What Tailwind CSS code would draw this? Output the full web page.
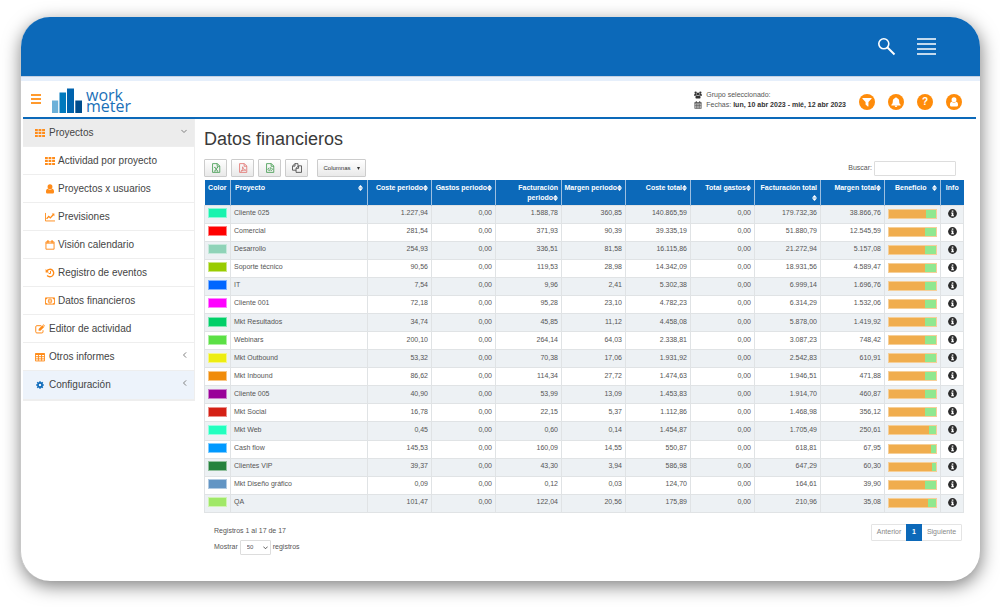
<!DOCTYPE html>
<html lang="es">
<head>
  <meta charset="UTF-8" />
  <meta name="viewport" content="width=device-width, initial-scale=1" />
  <title>WorkMeter - Datos financieros</title>
  <script src="https://cdn.jsdelivr.net/npm/@tailwindcss/browser@4"></script>
</head>
<body class="bg-white px-5 pt-[17px] pb-[26px] font-['Liberation_Sans',Arial,sans-serif] text-[7px] text-[#555]">

  <!-- Iconos -->
  <svg class="hidden">
    <symbol id="i-th" viewBox="0 0 16 16"><path fill="currentColor" d="M0 1.500h4.500v3.500H0zM5.700 1.500h4.500v3.500H5.700zM11.400 1.500H16v3.500h-4.600zM0 6.200h4.500v3.500H0zM5.700 6.200h4.500v3.500H5.700zM11.400 6.200H16v3.500h-4.600zM0 11h4.500v3.500H0zM5.700 11h4.500v3.500H5.700zM11.400 11H16v3.500h-4.600z"/></symbol>
    <symbol id="i-user" viewBox="0 0 16 16"><path fill="currentColor" d="M8 .5a3.900 3.900 0 0 1 3.900 4A3.900 3.900 0 0 1 8 8.500a3.900 3.900 0 0 1-3.900-4A3.900 3.900 0 0 1 8 .5zM4.600 7.600C2.400 8 1.500 10 1.500 12.300c0 1.900 1.200 3 2.700 3h7.600c1.500 0 2.700-1.100 2.700-3 0-2.300-.9-4.300-3.100-4.700A4.700 4.700 0 0 1 8 9.300a4.700 4.700 0 0 1-3.400-1.700z"/></symbol>
    <symbol id="i-chart" viewBox="0 0 16 16"><path fill="none" stroke="currentColor" stroke-width="1.500" d="M.7 1.500v12.800H16"/><path fill="none" stroke="currentColor" stroke-width="2.200" d="M2.500 11l3.500-4 2.500 2.400 5-5.400"/><path fill="currentColor" d="M10.800 2.500H15v4.300z"/></symbol>
    <symbol id="i-cal" viewBox="0 0 16 16"><path fill="none" stroke="currentColor" stroke-width="1.500" d="M1.500 3h13v11.700h-13zM1.500 5h13"/><path stroke="currentColor" stroke-width="2.400" d="M4.700 .5v4M11.300 .5v4"/></symbol>
    <symbol id="i-calgrid" viewBox="0 0 16 16"><path fill="none" stroke="currentColor" stroke-width="1.300" d="M1.500 3h13v12h-13zM1.500 6h13M1.500 9h13M1.500 12h13M4.800 6v9M8 6v9M11.200 6v9"/><path stroke="currentColor" stroke-width="2.400" d="M1.500 4h13M4.700 .5v4M11.300 .5v4"/></symbol>
    <symbol id="i-history" viewBox="0 0 16 16"><path fill="none" stroke="currentColor" stroke-width="2.200" d="M3 4.600A6 6 0 1 1 3.400 12"/><path fill="currentColor" d="M1 1.500V7h5.500z"/><path fill="none" stroke="currentColor" stroke-width="1.600" d="M8.800 4.800v4H6"/></symbol>
    <symbol id="i-money" viewBox="0 0 16 16"><path fill="none" stroke="currentColor" stroke-width="1.500" d="M.7 3h14.600v10H.7z"/><path fill="currentColor" d="M1 3h2.400A2.400 2.400 0 0 1 1 5.400zM15 3h-2.400A2.400 2.400 0 0 0 15 5.400zM1 13h2.400A2.400 2.400 0 0 0 1 10.600zM15 13h-2.400a2.400 2.400 0 0 1 2.400-2.400z"/><ellipse cx="8" cy="8" rx="2.800" ry="3.300" fill="none" stroke="currentColor" stroke-width="1.400"/><path stroke="currentColor" stroke-width="1.400" d="M8 6v4"/></symbol>
    <symbol id="i-edit" viewBox="0 0 16 16"><path fill="none" stroke="currentColor" stroke-width="1.600" d="M10 2.700H3A1.800 1.800 0 0 0 1.200 4.500v8A1.800 1.800 0 0 0 3 14.300h8a1.800 1.800 0 0 0 1.800-1.800V10"/><path fill="currentColor" d="M5.800 8l6-6 2.900 2.900-6 6H5.800z"/><path fill="currentColor" d="M12.500 1.300l1-.9 2.500 2.600-.9 1z"/></symbol>
    <symbol id="i-table" viewBox="0 0 16 16"><path fill="none" stroke="currentColor" stroke-width="1.500" d="M.7 2.500h14.600v11.800H.7zM.7 7.500h14.600M.7 11h14.600M5.500 4v10M10.500 4v10"/><path fill="currentColor" d="M.7 2h14.600v2.800H.7z"/></symbol>
    <symbol id="i-cog" viewBox="0 0 16 16"><circle cx="8" cy="8" r="4.200" fill="none" stroke="currentColor" stroke-width="3.400"/><path stroke="currentColor" stroke-width="3" d="M8 .4v2.400M8 13.200v2.400M.4 8h2.400M13.200 8h2.400M2.600 2.600l1.700 1.700M11.700 11.700l1.700 1.700M13.400 2.600l-1.700 1.700M4.300 11.700l-1.700 1.700"/></symbol>
    <symbol id="i-group" viewBox="0 0 16 16"><g fill="currentColor"><circle cx="3.300" cy="3.500" r="2.300"/><circle cx="12.700" cy="3.500" r="2.300"/><path d="M0 9.500C0 7.400.8 6.200 2 6.200h3L4.800 9.500zM16 9.500c0-2.100-.8-3.300-2-3.300h-3l.2 3.300z"/><circle cx="8" cy="6" r="3.100"/><path d="M5.200 9C3.500 9.400 2.900 11 2.900 13c0 1.400.7 2 1.900 2h6.400c1.200 0 1.900-.6 1.900-2 0-2-.6-3.600-2.300-4-1.700 1.400-3.900 1.400-5.600 0z"/></g></symbol>
    <symbol id="i-filter" viewBox="0 0 16 16"><path fill="currentColor" d="M1.300 1.500h13.400c.7 0 .9.800.5 1.200L10.300 8v6.600c0 .6-.7.900-1.100.5L6 12.300a.8.800 0 0 1-.3-.6V8L.8 2.700c-.4-.4-.2-1.200.5-1.200z"/></symbol>
    <symbol id="i-bell" viewBox="0 0 16 16"><path fill="currentColor" d="M8 .3c.7 0 1.100.5 1.100 1.100v.3c2.800.5 4 2.600 4 5.200 0 3.100.9 4.600 2.400 5.600v1H.5v-1c1.500-1 2.400-2.500 2.400-5.600 0-2.600 1.200-4.700 4-5.200v-.3C6.900.8 7.300.3 8 .3zM5.900 13.800h4.200a2.100 2.100 0 0 1-4.200 0z"/></symbol>
    <symbol id="i-file" viewBox="0 0 16 16"><path fill="none" stroke="currentColor" stroke-width="1.300" d="M2.500 1h7.700L14 4.800V15H2.500zM9.800 1v4.200H14"/></symbol>
    <symbol id="i-sort" viewBox="0 0 10 12"><path fill="currentColor" d="M5 0l5 5.300H0zM5 12L0 6.700h10z"/></symbol>
    <symbol id="i-info" viewBox="0 0 16 16"><circle cx="8" cy="8" r="7.800" fill="currentColor"/><path fill="#fff" d="M6.700 2.600h2.800v2.300H6.700zM5.600 6.300h3.900v4.800h1.100v1.700h-5v-1.700h1.100V8H5.600z"/></symbol>
    <symbol id="i-down" viewBox="0 0 16 16"><path fill="none" stroke="currentColor" stroke-width="2.500" d="M1 5l7 7 7-7"/></symbol>
    <symbol id="i-left" viewBox="0 0 16 16"><path fill="none" stroke="currentColor" stroke-width="2.500" d="M11 1L4 8l7 7"/></symbol>
  </svg>

  <div class="rounded-[30px] overflow-hidden bg-white border-l border-[#c8c8c8] pb-[26px] shadow-[1px_5px_18px_rgba(0,0,0,0.5)]">

    <!-- Barra superior -->
    <div class="h-[59px] bg-[#0c69b9] text-white flex items-center justify-end gap-[21px] pr-11">
      <button aria-label="Buscar en el sitio">
        <svg class="w-[19px] h-[19px]" viewBox="0 0 19 19" fill="none" stroke="currentColor"><circle cx="6.800" cy="6.800" r="5" stroke-width="1.600"/><path stroke-width="2" d="M10.500 10.500l7 7"/></svg>
      </button>
      <button aria-label="Menú">
        <svg class="w-[19px] h-[17px]" viewBox="0 0 19 17" stroke="currentColor" stroke-width="1.600"><path d="M0 1h19M0 6h19M0 11h19M0 16h19"/></svg>
      </button>
    </div>
    <div class="h-[5px] bg-[#e6effb] border-t border-[#c3d0e2]"></div>

    <div class="ml-0.5">
      <!-- Cabecera -->
      <header class="h-[38px] mr-1 border-b-2 border-[#0c69b9] flex items-center pl-2 pr-3.5">
        <button aria-label="Contraer menú" class="text-[#ff9a2e]">
          <svg class="w-2.5 h-2.5" viewBox="0 0 10 10" stroke="currentColor" stroke-width="2"><path d="M0 1h10M0 5h10M0 9h10"/></svg>
        </button>
        <a href="#" class="ml-2.5 pt-0.5 flex items-center gap-1 text-[#1a70b8]">
          <svg class="w-[31px] h-[25px]" viewBox="0 0 31 25"><path fill="#6cb0d8" d="M1 12.500h6.200V25H1z"/><path fill="#0079bd" d="M8.500 4.500H15V25H8.500z"/><path fill="#0063ad" d="M16 .5h7V25h-7z"/><path fill="#004d8d" d="M24.300 12.500H31V25h-6.700z"/></svg>
          <span class="font-['Open_Sans',sans-serif] text-[16px] leading-[11px] pt-0.5">work<br>meter</span>
        </a>
        <div class="ml-auto mr-[13px] pt-0.5 leading-[10px] flex flex-col">
          <div class="flex items-center gap-1"><svg class="w-2 h-2 text-[#333]"><use href="#i-group"/></svg>Grupo seleccionado:</div>
          <div class="flex items-center gap-1"><svg class="w-2 h-2"><use href="#i-calgrid"/></svg><span>Fechas: <b class="text-[#333]">lun, 10 abr 2023 - mié, 12 abr 2023</b></span></div>
        </div>
        <div class="flex gap-[13px] pt-1.5 text-white">
          <button aria-label="Filtros" class="size-4 rounded-full bg-[#ff8c0a] flex items-center justify-center"><svg class="size-2.5"><use href="#i-filter"/></svg></button>
          <button aria-label="Avisos" class="size-4 rounded-full bg-[#ff8c0a] flex items-center justify-center"><svg class="size-2.5"><use href="#i-bell"/></svg></button>
          <button aria-label="Ayuda" class="size-4 rounded-full bg-[#ff8c0a] flex items-center justify-center text-[10px] leading-none font-bold">?</button>
          <button aria-label="Usuario" class="size-4 rounded-full bg-[#ff8c0a] flex items-center justify-center"><svg class="size-2.5"><use href="#i-user"/></svg></button>
        </div>
      </header>

      <div class="flex items-start">
        <!-- Menú lateral -->
        <nav class="w-[172px] shrink-0 border-r border-b-2 border-[#eee] text-[10px] text-[#444]">
          <a href="#" class="h-7 pl-3 pr-[7px] flex items-center gap-1 bg-[#ececec] border-b border-[#eee]"><svg class="size-2.5 text-[#ff8c1a]"><use href="#i-th"/></svg>Proyectos<svg class="size-1.5 ml-auto mb-1 text-[#777]"><use href="#i-down"/></svg></a>
          <a href="#" class="h-7 pl-[22px] flex items-center gap-[3px] border-b border-[#eee]"><svg class="size-2.5 text-[#ff8c1a]"><use href="#i-th"/></svg>Actividad por proyecto</a>
          <a href="#" class="h-7 pl-[22px] flex items-center gap-[3px] border-b border-[#eee]"><svg class="size-2.5 text-[#ff8c1a]"><use href="#i-user"/></svg>Proyectos x usuarios</a>
          <a href="#" class="h-7 pl-[22px] flex items-center gap-[3px] border-b border-[#eee]"><svg class="size-2.5 text-[#ff8c1a]"><use href="#i-chart"/></svg>Previsiones</a>
          <a href="#" class="h-7 pl-[22px] flex items-center gap-[3px] border-b border-[#eee]"><svg class="size-2.5 text-[#ff8c1a]"><use href="#i-cal"/></svg>Visión calendario</a>
          <a href="#" class="h-7 pl-[22px] flex items-center gap-[3px] border-b border-[#eee]"><svg class="size-2.5 text-[#ff8c1a]"><use href="#i-history"/></svg>Registro de eventos</a>
          <a href="#" class="h-7 pl-[22px] flex items-center gap-[3px] border-b border-[#eee]"><svg class="size-2.5 text-[#ff8c1a]"><use href="#i-money"/></svg>Datos financieros</a>
          <a href="#" class="h-7 pl-3 flex items-center gap-1 border-b border-[#eee]"><svg class="size-2.5 text-[#ff8c1a]"><use href="#i-edit"/></svg>Editor de actividad</a>
          <a href="#" class="h-7 pl-3 pr-1.5 flex items-center gap-1 border-b border-[#eee]"><svg class="size-2.5 text-[#ff8c1a]"><use href="#i-table"/></svg>Otros informes<svg class="size-1.5 ml-auto mb-1 text-[#777]"><use href="#i-left"/></svg></a>
          <a href="#" class="h-7 pl-3 pr-1.5 flex items-center gap-1 bg-[#edf3fb] border-b border-[#edf3fb]"><svg class="size-2.5 p-px text-[#0c69b9]"><use href="#i-cog"/></svg>Configuración<svg class="size-1.5 ml-auto mb-1 text-[#777]"><use href="#i-left"/></svg></a>
        </nav>

        <!-- Contenido -->
        <main class="flex-1 min-w-0 pl-[9px] pr-4">
          <h1 class="pt-2 text-[18px] leading-6 text-[#3a3a3a]">Datos financieros</h1>

          <div class="mt-2 mb-[3px] flex items-center">
            <div class="flex gap-1">
              <button aria-label="Exportar a Excel" class="w-[23px] h-[18px] rounded-[1px] border border-[#ccc] bg-linear-to-b from-white to-[#e9e9e9] flex items-center justify-center text-[#3f9a4c]"><svg class="size-2.5" viewBox="0 0 16 16"><use href="#i-file"/><path fill="none" stroke="currentColor" stroke-width="1.300" d="M6 7l4.500 6M10.500 7L6 13M5.200 7h2M9.300 7h2M5.200 13h2M9.300 13h2"/></svg></button>
              <button aria-label="Exportar a PDF" class="w-[23px] h-[18px] rounded-[1px] border border-[#ccc] bg-linear-to-b from-white to-[#e9e9e9] flex items-center justify-center text-[#e2706d]"><svg class="size-2.5" viewBox="0 0 16 16"><use href="#i-file"/><path fill="none" stroke="currentColor" stroke-width="1.200" d="M4.500 13.500c2-1 3.500-4 3-7.500 0 3 2 5.200 5 5.500-3-.5-5.500.3-8 2z"/></svg></button>
              <button aria-label="Exportar a CSV" class="w-[23px] h-[18px] rounded-[1px] border border-[#ccc] bg-linear-to-b from-white to-[#e9e9e9] flex items-center justify-center text-[#3f9a4c]"><svg class="size-2.5" viewBox="0 0 16 16"><use href="#i-file"/><path fill="none" stroke="currentColor" stroke-width="1.300" d="M6.500 7.500l-2 2.500 2 2.500M10 7.500l2 2.500-2 2.500M8.800 7l-1.200 6"/></svg></button>
              <button aria-label="Copiar" class="w-[23px] h-[18px] rounded-[1px] border border-[#ccc] bg-linear-to-b from-white to-[#e9e9e9] flex items-center justify-center text-[#444]"><svg class="size-2.5" viewBox="0 0 16 16"><path fill="none" stroke="currentColor" stroke-width="1.300" d="M6.500 11.500H.8V5L4.500 1h5v3.500M4.800 1v4H1M6.500 8.500l3.700-4h5V15H6.500zM10.500 4.500v4h-4"/></svg></button>
            </div>
            <button class="ml-[9px] w-[49px] h-[18px] rounded-[1px] border border-[#ccc] bg-linear-to-b from-white to-[#e9e9e9] flex items-center justify-center gap-1.5 text-[6px] text-[#333]">Columnas <svg class="w-[3px] h-[3px]" viewBox="0 0 4 4"><path fill="currentColor" d="M0 0h4L2 4z"/></svg></button>
            <label for="buscar" class="ml-auto mr-0.5">Buscar:</label>
            <input id="buscar" type="text" class="w-[82px] h-[15px] mr-2 px-1 border border-[#ddd] rounded-[1px] outline-none" />
          </div>

          <table class="w-full h-[333px] table-fixed border-collapse">
            <colgroup>
              <col class="w-[26px]"><col><col class="w-[64px]"><col class="w-[64px]"><col class="w-[66px]"><col class="w-[64px]"><col class="w-[65px]"><col class="w-[64px]"><col class="w-[66px]"><col class="w-[64px]"><col class="w-[56px]"><col class="w-[23px]">
            </colgroup>
            <thead class="bg-[#0c69b9] text-white text-right leading-[10px]">
              <tr class="h-[25px] align-top">
                <th class="pt-[3px] border-r border-[#9dbfe0] text-center">Color</th>
                <th class="pt-[3px] px-1 border-r border-[#9dbfe0]"><span class="flex items-center justify-between">Proyecto<svg class="w-[5px] h-1.5"><use href="#i-sort"/></svg></span></th>
                <th class="pt-[3px] pr-[3px] border-r border-[#9dbfe0] whitespace-nowrap">Coste periodo<svg class="w-[5px] h-1.5 inline-block align-[-1px]"><use href="#i-sort"/></svg></th>
                <th class="pt-[3px] pr-[3px] border-r border-[#9dbfe0] whitespace-nowrap">Gastos periodo<svg class="w-[5px] h-1.5 inline-block align-[-1px]"><use href="#i-sort"/></svg></th>
                <th class="pt-[3px] pr-[3px] border-r border-[#9dbfe0]">Facturación periodo<svg class="w-[5px] h-1.5 inline-block align-[-1px]"><use href="#i-sort"/></svg></th>
                <th class="pt-[3px] pr-[3px] border-r border-[#9dbfe0] whitespace-nowrap">Margen periodo<svg class="w-[5px] h-1.5 inline-block align-[-1px]"><use href="#i-sort"/></svg></th>
                <th class="pt-[3px] pr-[3px] border-r border-[#9dbfe0] whitespace-nowrap">Coste total<svg class="w-[5px] h-1.5 inline-block align-[-1px]"><use href="#i-sort"/></svg></th>
                <th class="pt-[3px] pr-[3px] border-r border-[#9dbfe0] whitespace-nowrap">Total gastos<svg class="w-[5px] h-1.5 inline-block align-[-1px]"><use href="#i-sort"/></svg></th>
                <th class="pt-[3px] pr-[3px] border-r border-[#9dbfe0]">Facturación total <svg class="w-[5px] h-1.5 inline-block align-[-1px]"><use href="#i-sort"/></svg></th>
                <th class="pt-[3px] pr-[3px] border-r border-[#9dbfe0] whitespace-nowrap">Margen total<svg class="w-[5px] h-1.5 inline-block align-[-1px]"><use href="#i-sort"/></svg></th>
                <th class="pt-[3px] pl-2.5 pr-[3px] border-r border-[#9dbfe0]"><span class="flex items-center justify-between">Beneficio<svg class="w-[5px] h-1.5"><use href="#i-sort"/></svg></span></th>
                <th class="pt-[3px] text-center">Info</th>
              </tr>
            </thead>
            <tbody id="filas" class="text-right leading-[10px]"></tbody>
          </table>

          <div class="mt-[11px] pl-2.5 pr-0.5 flex items-start justify-between">
            <div class="pt-px">
              <p class="leading-[12px]">Registros 1 al 17 de 17</p>
              <div class="mt-[3px] flex items-center gap-0.5">
                <label for="mostrar">Mostrar</label>
                <span class="relative">
                  <select id="mostrar" class="block appearance-none w-[31px] h-[15px] pl-1.5 border border-[#ddd] rounded-[1px] bg-white text-[6px]"><option>10</option><option>25</option><option selected>50</option><option>100</option></select>
                  <svg class="absolute right-[3px] top-[5px] size-[5px] text-[#333] pointer-events-none"><use href="#i-down"/></svg>
                </span>
                <span>registros</span>
              </div>
            </div>
            <div class="flex h-[17px] border border-[#e4e4e4] rounded-[1px] text-[#888]">
              <button class="w-[34px]">Anterior</button>
              <button class="w-4 -my-px bg-[#0c69b9] text-white font-bold">1</button>
              <button class="w-[39px]">Siguiente</button>
            </div>
          </div>
        </main>
      </div>
    </div>
  </div>

  <script>
    // color, proyecto, coste/gastos/facturación/margen del periodo, coste/gastos/facturación/margen total
    const datos = [
      ['#19f3ae', 'Cliente 025', '1.227,94', '0,00', '1.588,78', '360,85', '140.865,59', '0,00', '179.732,36', '38.866,76'],
      ['#ff0000', 'Comercial', '281,54', '0,00', '371,93', '90,39', '39.335,19', '0,00', '51.880,79', '12.545,59'],
      ['#8fd3b8', 'Desarrollo', '254,93', '0,00', '336,51', '81,58', '16.115,86', '0,00', '21.272,94', '5.157,08'],
      ['#99cc00', 'Soporte técnico', '90,56', '0,00', '119,53', '28,98', '14.342,09', '0,00', '18.931,56', '4.589,47'],
      ['#0066ff', 'IT', '7,54', '0,00', '9,96', '2,41', '5.302,38', '0,00', '6.999,14', '1.696,76'],
      ['#ff00ff', 'Cliente 001', '72,18', '0,00', '95,28', '23,10', '4.782,23', '0,00', '6.314,29', '1.532,06'],
      ['#00cf68', 'Mkt Resultados', '34,74', '0,00', '45,85', '11,12', '4.458,08', '0,00', '5.878,00', '1.419,92'],
      ['#5be045', 'Webinars', '200,10', '0,00', '264,14', '64,03', '2.338,81', '0,00', '3.087,23', '748,42'],
      ['#eded12', 'Mkt Outbound', '53,32', '0,00', '70,38', '17,06', '1.931,92', '0,00', '2.542,83', '610,91'],
      ['#f08c0a', 'Mkt Inbound', '86,62', '0,00', '114,34', '27,72', '1.474,63', '0,00', '1.946,51', '471,88'],
      ['#990099', 'Cliente 005', '40,90', '0,00', '53,99', '13,09', '1.453,83', '0,00', '1.914,70', '460,87'],
      ['#d42015', 'Mkt Social', '16,78', '0,00', '22,15', '5,37', '1.112,86', '0,00', '1.468,98', '356,12'],
      ['#22ffbf', 'Mkt Web', '0,45', '0,00', '0,60', '0,14', '1.454,87', '0,00', '1.705,49', '250,61'],
      ['#0099ff', 'Cash flow', '145,53', '0,00', '160,09', '14,55', '550,87', '0,00', '618,81', '67,95'],
      ['#25823d', 'Clientes VIP', '39,37', '0,00', '43,30', '3,94', '586,98', '0,00', '647,29', '60,30'],
      ['#6295c4', 'Mkt Diseño gráfico', '0,09', '0,00', '0,12', '0,03', '124,70', '0,00', '164,61', '39,90'],
      ['#a0e868', 'QA', '101,47', '0,00', '122,04', '20,56', '175,89', '0,00', '210,96', '35,08'],
    ];

    const numero = t => parseFloat(t.replace(/\./g, '').replace(',', '.'));

    document.getElementById('filas').innerHTML = datos.map(([color, proyecto, ...valores]) => {
      const beneficio = numero(valores[7]) / numero(valores[6]) * 100;
      return `
        <tr class="h-[18px] border border-[#e0e3e5] odd:bg-[#edf1f4]">
          <td class="border-r border-[#e0e3e5]"><div class="w-[19px] h-2.5 mx-auto mb-0.5 border border-white/50" style="background-color:${color}"></div></td>
          <td class="pl-[3px] pb-0.5 border-r border-[#e0e3e5] text-left">${proyecto}</td>
          ${valores.map(v => `<td class="pr-[3px] pb-0.5 border-r border-[#e0e3e5]">${v}</td>`).join('')}
          <td class="border-r border-[#e0e3e5]"><div class="w-[49px] h-2.5 mx-auto mb-px border border-[#f6cf98] bg-[#f0ad4e] flex justify-end"><div class="bg-[#90e890]" style="width:${beneficio}%"></div></div></td>
          <td class="pb-0.5"><button aria-label="Información de ${proyecto}" class="block mx-auto text-[#2b2b2b]"><svg class="size-[9px]"><use href="#i-info"/></svg></button></td>
        </tr>`;
    }).join('');
  </script>
</body>
</html>
